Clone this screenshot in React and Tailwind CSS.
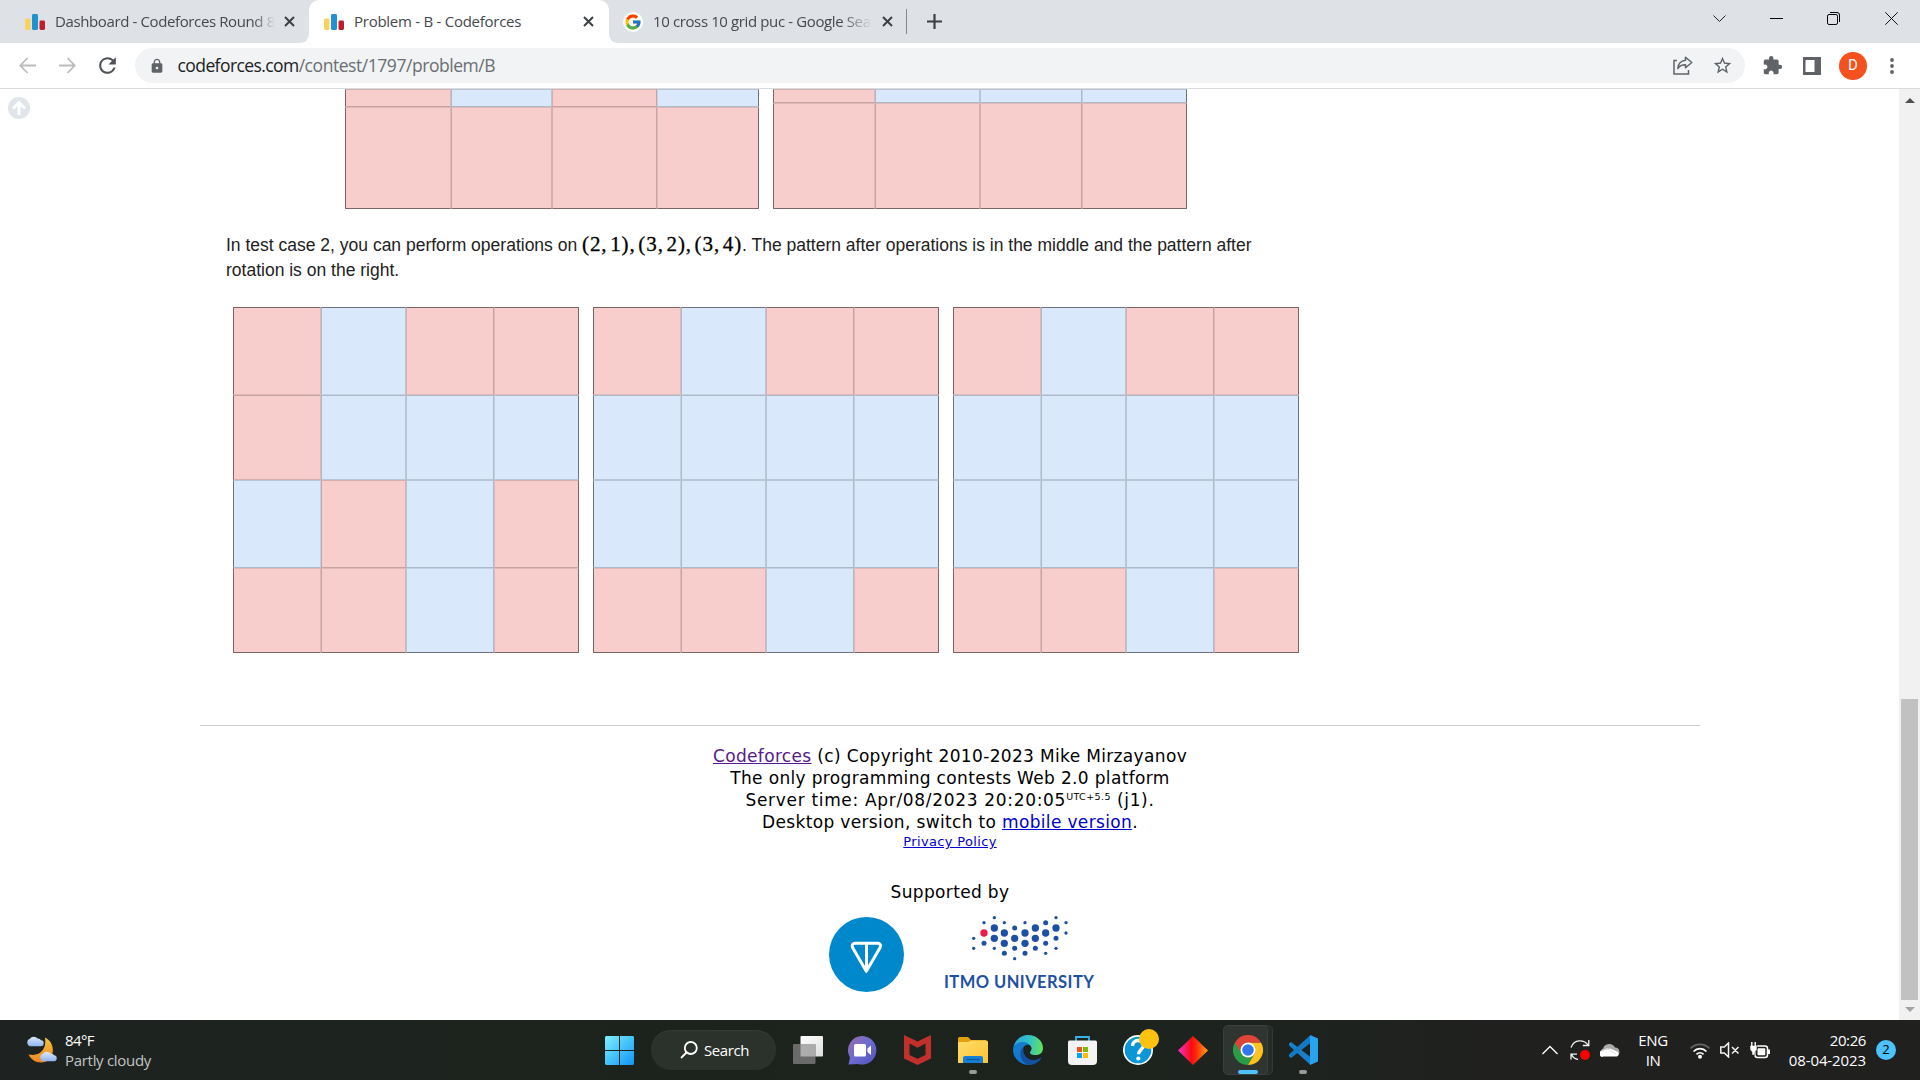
import React from "react";
import { FcGoogle } from "react-icons/fc";
import { MdExtension, MdStarBorder, MdLock, MdRefresh } from "react-icons/md";

const UI = "font-['Open_Sans','Noto_Sans',sans-serif]";

function CfIcon() {
  return (
    <svg className="h-4 w-5 shrink-0" viewBox="0 0 20 16">
      <rect x="0" y="4.5" width="5.5" height="11.5" rx="1.4" fill="#fad15c" />
      <rect x="7" y="0" width="6" height="16" rx="1.4" fill="#1f93d2" />
      <rect x="14.5" y="6.5" width="5.5" height="9.5" rx="1.4" fill="#bf1f2b" />
    </svg>
  );
}

function CloseX() {
  return (
    <svg className="h-[11px] w-[11px] shrink-0" viewBox="0 0 11 11" stroke="#3c4043" strokeWidth="2">
      <path d="M1 1l9 9M10 1l-9 9" />
    </svg>
  );
}

function TabStrip() {
  return (
    <div className={`flex h-[43px] items-stretch bg-[#dee1e6] text-[15px] text-[#45494d] ${UI}`}>
      <div className="flex h-full w-[299px] items-center pl-[25px]">
        <CfIcon />
        <div className="ml-[10px] w-[220px] whitespace-nowrap tracking-[-0.38px] [mask-image:linear-gradient(to_right,#000_90%,transparent)]">
          Dashboard - Codeforces Round 8
        </div>
        <div className="ml-[9px]"><CloseX /></div>
      </div>
      <svg className="mt-auto h-[10px] w-[10px]" viewBox="0 0 10 10"><path d="M0 10Q10 10 10 0V10Z" fill="#fff" /></svg>
      <div className="flex h-full w-[300px] items-center rounded-t-[10px] bg-white pl-[15px]">
        <CfIcon />
        <div className="ml-[10px] w-[219px] whitespace-nowrap tracking-[-0.26px]">Problem - B - Codeforces</div>
        <div className="ml-[10px]"><CloseX /></div>
      </div>
      <svg className="mt-auto h-[10px] w-[10px]" viewBox="0 0 10 10"><path d="M10 10Q0 10 0 0V10Z" fill="#fff" /></svg>
      <div className="flex h-full items-center pl-[4px]">
        <div className="flex h-5 w-5 items-center justify-center rounded-full bg-white"><FcGoogle size={18} /></div>
        <div className="ml-[10px] w-[219px] whitespace-nowrap tracking-[-0.38px] [mask-image:linear-gradient(to_right,#000_86%,transparent)]">
          10 cross 10 grid puc - Google Sea
        </div>
        <div className="ml-[10px]"><CloseX /></div>
        <div className="ml-[13px] h-[25px] w-px bg-[#85888c]" />
        <svg className="ml-[20px] h-[15px] w-[15px]" viewBox="0 0 15 15" stroke="#3c4043" strokeWidth="2.2"><path d="M7.5 0v15M0 7.5h15" /></svg>
      </div>
      <div className="ml-auto flex h-[37px] items-center pr-[22px]">
        <svg className="h-[13px] w-[13px]" viewBox="0 0 13 13" fill="none" stroke="#222"><path d="M.5 3.5l6 6 6-6" /></svg>
        <svg className="ml-[44px] h-[13px] w-[13px]" viewBox="0 0 13 13" stroke="#000"><path d="M0 6.5h13" /></svg>
        <svg className="ml-[44px] h-[13px] w-[13px]" viewBox="0 0 13 13" fill="none" stroke="#000">
          <rect x=".5" y="2.5" width="10" height="10" rx="1.6" /><path d="M3 .5h7a2.5 2.5 0 0 1 2.5 2.5v7" />
        </svg>
        <svg className="ml-[45px] h-[13px] w-[13px]" viewBox="0 0 13 13" stroke="#111"><path d="M.3.3l12.4 12.4M12.7.3L.3 12.7" /></svg>
      </div>
    </div>
  );
}

function Toolbar() {
  return (
    <div className="flex h-[46px] items-center border-b border-[#d9dbde] bg-white">
      <svg className="ml-[19px] h-[17px] w-[17px]" viewBox="0 0 17 17" fill="none" stroke="#babcbe" strokeWidth="1.8"><path d="M17 8.5H1.5M8.5 1L1.3 8.5 8.5 16" /></svg>
      <svg className="ml-[23px] h-[17px] w-[17px]" viewBox="0 0 17 17" fill="none" stroke="#babcbe" strokeWidth="1.8"><path d="M0 8.5h15.5M8.500 1l7.200 7.500L8.500 16" /></svg>
      <MdRefresh className="ml-[19px] text-[#4f5358]" size={25} />
      <div className="ml-[15px] flex h-[35px] w-[1610px] items-center rounded-full bg-[#f1f3f4] pl-[14px]">
        <MdLock className="text-[#5f6368]" size={16} />
        <div className={`ml-[12.5px] text-[17.5px] tracking-[-0.45px] text-[#6a6e73] ${UI}`}>
          <span className="tracking-[-0.58px] text-[#202124]">codeforces.com</span>/contest/1797/problem/B
        </div>
        <svg className="ml-auto h-[19px] w-[20px]" viewBox="0 0 20 19" fill="none" stroke="#5f6368" strokeWidth="1.5">
          <path d="M4 4.500H1v13.500h14.500v-4" /><path d="M12.500 1.200l6.300 5.300-6.300 5.300V8.800C9 8.800 6.500 9.800 4.800 12.500 5 8 8 4.600 12.500 4.200Z" strokeLinejoin="round" />
        </svg>
        <MdStarBorder className="ml-[19px] mr-[12px] text-[#5f6368]" size={21} />
      </div>
      <MdExtension className="ml-[17px] text-[#5f6368]" size={21} />
      <svg className="ml-[20px] h-[18px] w-[18px]" viewBox="0 0 18 18"><path d="M0 0h18v18H0z" fill="#5f6368" /><path d="M2.500 3h9v12h-9z" fill="#fff" /></svg>
      <div className="ml-[18px] flex h-7 w-7 items-center justify-center rounded-full bg-[#f4511e] font-[Roboto,sans-serif] text-[15px] text-white">D</div>
      <svg className="ml-[23px] h-[16px] w-[4px]" viewBox="0 0 4 16" fill="#5f6368"><circle cx="2" cy="2" r="1.900" /><circle cx="2" cy="8" r="1.900" /><circle cx="2" cy="14" r="1.900" /></svg>
    </div>
  );
}

const XB = [
  "border-l-black/50 border-r-black/10",
  "border-l-black/20 border-r-black/15",
  "border-l-black/15 border-r-black/20",
  "border-l-black/10 border-r-black/50",
];
const YB = [
  "border-t-black/50 border-b-black/10",
  "border-t-black/20 border-b-black/15",
  "border-t-black/15 border-b-black/20",
  "border-t-black/10 border-b-black/50",
];

/* Draws a board from rows of R (red) and B (blue) letters; partial boards show their last rows. */
function Board({ rows, tracks }) {
  const first = 4 - rows.length;
  return (
    <div className={`grid ${tracks}`}>
      {rows.map((row, y) =>
        row.split("").map((c, x) => (
          <div key={`${y}-${x}`} className={`border ${XB[x]} ${YB[y + first]} ${c === "R" ? "bg-[#f8cecc]" : "bg-[#dae8fc]"}`} />
        ))
      )}
    </div>
  );
}

const FULL = "h-[346px] w-[346px] grid-cols-[88px_85px_88px_85px] grid-rows-[88px_85px_88px_85px]";

const SMALL = [[583,113],[552,128],[613,128],[675,128],[768,113],[798,128],[798,159],[521,175],[521,205],[583,205],[644,236],[737,220],[768,205]];
const MEDIUM = [[644,144],[737,128],[552,190],[613,220],[644,205],[675,220],[706,205],[737,190],[768,175]];
const LARGE = [[583,144],[613,159],[583,175],[613,190],[644,175],[675,159],[675,190],[706,144],[706,175],[737,159],[768,144]];

function Sponsors() {
  return (
    <div className="mt-[14px] flex pl-[829px]">
      <svg className="h-[75px] w-[75px]" viewBox="87 111 225 225">
        <circle cx="199.500" cy="223.500" r="112.500" fill="#0088cc" />
        <path d="M165 190h69q11 2 6 13l-41 71-41-71q-5-11 7-13ZM199.500 190v82" fill="none" stroke="#fff" strokeWidth="9" strokeLinejoin="round" />
      </svg>
      <div className="ml-[41px] -mt-[2px] w-[150px]">
        <svg className="h-[47px] w-[150px]" viewBox="435 105 450 141" fill="#1d50a4">
          {SMALL.map(([x, y]) => <circle key={`${x},${y}`} cx={x} cy={y} r="5" />)}
          {MEDIUM.map(([x, y]) => <circle key={`${x},${y}`} cx={x} cy={y} r="7.500" />)}
          {LARGE.map(([x, y]) => <circle key={`${x},${y}`} cx={x} cy={y} r="11" />)}
          <circle cx="552" cy="159" r="11" fill="#ee1a4a" />
        </svg>
        <div className="-ml-px mt-[9px] whitespace-nowrap font-[Lato,sans-serif] text-[16.500px] font-bold leading-[22px] tracking-[0.45px] text-[#1d50a4]">ITMO UNIVERSITY</div>
      </div>
    </div>
  );
}

function Page() {
  return (
    <div className="flex h-[931px] bg-white">
      <main className="relative w-[1899px] overflow-hidden">
        <svg className="absolute left-[7.5px] top-[8px] h-[22px] w-[22px]" viewBox="0 0 22 22">
          <circle cx="11" cy="11" r="11" fill="#e0e5eb" /><path d="M11 18V6M5 11.500l6-6 6 6" fill="none" stroke="#fff" strokeWidth="3" />
        </svg>
        <div className="flex gap-[14px] pl-[345px]">
          <Board rows={["RBRB", "RRRR"]} tracks="grid-cols-[106px_101px_105px_102px] grid-rows-[18px_102px]" />
          <Board rows={["RBBB", "RRRR"]} tracks="grid-cols-[102px_105px_102px_105px] grid-rows-[14px_106px]" />
        </div>
        <p className="mt-[24px] w-[1060px] whitespace-nowrap pl-[226px] font-['Liberation_Sans',Arial,sans-serif] text-[17.500px] leading-[25px] text-[#222]">
          In test case 2, you can perform operations on{" "}
          <span className="font-['Liberation_Serif',serif] text-[21px] leading-none tracking-[0.9px] text-black [-webkit-text-stroke:0.3px_#000] [word-spacing:-3.45px]">(2, 1), (3, 2), (3, 4)</span>. The pattern after operations is in the middle and the pattern after
          <br />
          rotation is on the right.
        </p>
        <div className="mt-[24px] flex gap-[14px] pl-[233px]">
          <Board rows={["RBRR", "RBBB", "BRBR", "RRBR"]} tracks={FULL} />
          <Board rows={["RBRR", "BBBB", "BBBB", "RRBR"]} tracks={FULL} />
          <Board rows={["RBRR", "BBBB", "BBBB", "RRBR"]} tracks={FULL} />
        </div>
        <div className="ml-[200px] mt-[72px] h-px w-[1500px] bg-[#ccc]" />
        <footer className="mt-[19px]">
          <div className="ml-[200px] w-[1500px] text-center font-['DejaVu_Sans',Verdana,sans-serif] text-[17px] leading-[22px] tracking-[0.34px] text-black">
            <div><a className="text-[#551a8b] underline">Codeforces</a> (c) Copyright 2010-2023 Mike Mirzayanov</div>
            <div>The only programming contests Web 2.0 platform</div>
            <div className="tracking-[0.68px]">Server time: Apr/08/2023 20:20:05<sup className="relative -top-[6px] align-baseline text-[9.500px] leading-none tracking-[0.4px]">UTC+5.5</sup> (j1).</div>
            <div>Desktop version, switch to <a className="text-[#0000cc] underline">mobile version</a>.</div>
            <div className="text-[13px] leading-[18px]"><a className="text-[#0000cc] underline">Privacy Policy</a></div>
            <div className="mt-[30px]">Supported by</div>
          </div>
          <Sponsors />
        </footer>
      </main>
      <div className="flex w-[21px] flex-col items-center bg-[#f1f1f1]">
        <svg className="mt-[9px] h-[5px] w-[10px]" viewBox="0 0 10 5" fill="#505050"><path d="M0 5L5 0l5 5z" /></svg>
        <div className="mt-[596px] h-[301px] w-[17px] bg-[#c1c1c1]" />
        <svg className="mt-[7px] h-[5px] w-[10px]" viewBox="0 0 10 5" fill="#a3a3a3"><path d="M0 0h10L5 5z" /></svg>
      </div>
    </div>
  );
}

function Slot({ children, mark }) {
  return (
    <div className="relative flex h-[60px] w-[55px] items-center justify-center">
      {children}
      {mark && <div className="absolute bottom-[6px] h-[4px] w-[8px] rounded-full bg-[#9a9a9a]" />}
    </div>
  );
}

const Cloud = ({ x, y, s }) => (
  <path transform={`translate(${x} ${y}) scale(${s})`} d="M4 11a4 4 0 0 1 0-7.600A5 5 0 0 1 12 3a3.500 3.500 0 0 1 3.500 2A3 3 0 0 1 15 11Z" fill="url(#cl)" />
);

function Taskbar() {
  return (
    <div className={`flex h-[60px] items-center bg-[linear-gradient(to_right,#1e2321_0%,#1c231c_35%,#1d231e_65%,#20201f_80%,#20201f_100%)] text-[15px] text-white ${UI}`}>
      <div className="flex w-[605px] items-center pl-[26px]">
        <svg className="h-[30px] w-[31px]" viewBox="0 0 31 30">
          <defs>
            <linearGradient id="mn" x1="0" y1="0" x2="0" y2="1"><stop offset="0" stopColor="#f4c63d" /><stop offset="1" stopColor="#f08322" /></linearGradient>
            <linearGradient id="cl" x1="0" y1="0" x2="0" y2="1"><stop offset="0" stopColor="#dce9fd" /><stop offset="1" stopColor="#8fb4ee" /></linearGradient>
          </defs>
          <path d="M19 2.500C31 8 29 27.500 15 27.500 9 27.500 5 24 2.500 19.500 14 22 21 14 19 2.500Z" fill="url(#mn)" />
          <Cloud x={0} y={0.5} s={0.97} />
          <Cloud x={13} y={15.500} s={0.97} />
        </svg>
        <div className="ml-[8px] leading-[20px]">
          <div className="tracking-[-0.6px]">84°F</div>
          <div className="tracking-[-0.3px] text-[#c3c3c3]">Partly cloudy</div>
        </div>
      </div>
      <svg className="h-[29px] w-[29px]" viewBox="0 0 29 29">
        <defs><linearGradient id="wn" x1="0" y1="0" x2="1" y2="1"><stop offset="0" stopColor="#7df0fe" /><stop offset="1" stopColor="#0f95f8" /></linearGradient></defs>
        <path d="M1 0h13v14H0V1zM15 0h13l1 1v13H15zM0 15h14v14H1l-1-1zM15 15h14v13l-1 1H15z" fill="url(#wn)" />
      </svg>
      <div className="ml-[17px] flex h-[40px] w-[125px] items-center rounded-full bg-[#2b322c] pl-[29px] shadow-[inset_0_1px_0_#353b36]">
        <svg className="h-[18px] w-[18px]" viewBox="0 0 18 18" fill="none" stroke="#fff" strokeWidth="1.800"><circle cx="10.800" cy="7" r="6" /><path d="M6.500 11.500L1 17" /></svg>
        <span className="ml-[6px] tracking-[-0.4px]">Search</span>
      </div>
      <div className="ml-[4px] flex">
        <Slot>
          <svg className="h-[28px] w-[30px]" viewBox="0 0 30 28">
            <defs><linearGradient id="tv" x1="0" y1="0" x2="1" y2="1"><stop offset="0" stopColor="#fff" /><stop offset="1" stopColor="#dedede" /></linearGradient></defs>
            <rect x="7.500" y="0" width="22.500" height="20.500" rx="1" fill="url(#tv)" /><rect x="0" y="8" width="22.500" height="20" rx="1" fill="#6a6a6a" /><path d="M7.500 8H22.500V20.500H7.500z" fill="#acacac" />
          </svg>
        </Slot>
        <Slot>
          <svg className="h-[29px] w-[29px]" viewBox="0 0 29 29">
            <defs><linearGradient id="ct" x1="0" y1="0" x2="1" y2="1"><stop offset="0" stopColor="#9a6dab" /><stop offset=".5" stopColor="#6c6bd0" /><stop offset="1" stopColor="#5351c0" /></linearGradient></defs>
            <path d="M14.500 0A14.300 14.300 0 1 1 10 28L.5 28.500 2 21.500A14.300 14.300 0 0 1 14.500 0Z" fill="url(#ct)" />
            <rect x="6" y="8" width="12" height="12.500" rx="1.500" fill="#fff" /><path d="M19.500 12.500L23 9.500v9.500l-3.500-3z" fill="#fff" />
          </svg>
        </Slot>
        <Slot>
          <svg className="h-[30px] w-[27px]" viewBox="0 0 27 30"><path fillRule="evenodd" d="M0 0L13.500 6.500 27 0v23.500L13.500 30 0 23.500ZM5.500 8.500v11.500l8 3.700 8-3.700V8.500l-8 4.200Z" fill="#c1302d" /></svg>
        </Slot>
        <Slot mark>
          <svg className="h-[26px] w-[30px]" viewBox="0 0 30 26">
            <defs><linearGradient id="fo" x1="0" y1="0" x2="1" y2="1"><stop offset="0" stopColor="#ffdc6b" /><stop offset="1" stopColor="#fcc432" /></linearGradient></defs>
            <path d="M0 1.500A1.500 1.500 0 0 1 1.500 0H10l3 3H28v8H0z" fill="#e0a10c" /><path d="M0 5h10l3-1.500h15.500A1.500 1.500 0 0 1 30 5v21H0z" fill="url(#fo)" />
            <path d="M5 26v-5a2 2 0 0 1 2-2h16a2 2 0 0 1 2 2v5z" fill="#147fd3" /><path d="M8.500 22.500h13" stroke="#0b57a0" strokeWidth="1.200" />
          </svg>
        </Slot>
        <Slot>
          <svg className="h-[30px] w-[30px]" viewBox="0 0 30 30">
            <defs>
              <linearGradient id="e1" x1="0" y1=".4" x2="1" y2=".5"><stop offset="0" stopColor="#2aa5e0" /><stop offset=".55" stopColor="#35c3c4" /><stop offset="1" stopColor="#63e35a" /></linearGradient>
              <linearGradient id="e2" x1="0" y1="0" x2="0" y2="1"><stop offset="0" stopColor="#1480d0" /><stop offset="1" stopColor="#1274d0" /></linearGradient>
            </defs>
            <path d="M.3 12.500C2 5 8 0 15 0c8.500 0 15 6 15 13 0 4.500-3 7-7 7-3.500 0-6.500-1-6-3 2-2 2.500-5-1-7.500C11 6 4 7 .3 12.500Z" fill="url(#e1)" />
            <path d="M0 15c0-5 4.500-8 9-8 3.500 0 6 1.200 7.500 3-4-1-7 2-7.500 6-.5 6 4 11.500 9.500 13.500C10 31 0 25 0 15Z" fill="url(#e2)" />
            <path d="M11 11.500C8.500 19 14 25 20.500 25c3 0 5.500-1 7.300-2.500.5-.4.8 0 .4.700C26 27 21.500 30 16 30 10 29 6.500 22 7.500 17c.5-2.500 1.800-4.500 3.500-5.500Z" fill="#1250a0" />
          </svg>
        </Slot>
        <Slot>
          <svg className="h-[29px] w-[29px]" viewBox="0 0 29 29">
            <path d="M8 6V1h13v5" fill="none" stroke="#36b3ea" strokeWidth="1.800" />
            <path d="M1 4.500h27l1 1V25a4 4 0 0 1-4 4H4a4 4 0 0 1-4-4V5.500z" fill="#f3f3f3" />
            <path d="M9 11h5v5H9z" fill="#f25022" /><path d="M15 11h5v5h-5z" fill="#7fba00" /><path d="M9 17h5v5H9z" fill="#00a4ef" /><path d="M15 17h5v5h-5z" fill="#ffb900" />
          </svg>
        </Slot>
        <Slot>
          <svg className="h-[40px] w-[40px] overflow-visible" viewBox="-5 -5 40 40">
            <circle cx="15" cy="15" r="15" fill="#fff" /><circle cx="15" cy="15" r="13.300" fill="#0b96d8" />
            <path d="M9.500 11c0-3.500 2.500-5.500 5.500-5.500s5.500 2 5.500 4.800c0 4-5 4.500-5 9" fill="none" stroke="#fff" strokeWidth="3.400" /><circle cx="15.300" cy="23.500" r="2.100" fill="#fff" />
            <circle cx="26" cy="4" r="10" fill="#ffc20e" />
          </svg>
        </Slot>
        <Slot>
          <svg className="h-[29px] w-[30px]" viewBox="0 0 30 29">
            <defs><linearGradient id="dm"><stop offset="0" stopColor="#f035c8" /><stop offset=".45" stopColor="#fb0a12" /><stop offset=".6" stopColor="#fb2a08" /><stop offset="1" stopColor="#fba51a" /></linearGradient></defs>
            <path d="M15 0l15 14.500L15 29 0 14.500z" fill="url(#dm)" />
          </svg>
        </Slot>
        <Slot>
          <div className="absolute left-[8px] top-[5px] h-[50px] w-[45px] rounded-[5px] border border-[#353936] bg-[#282c29]" />
          <div className="absolute left-[2.500px] top-[5px] flex h-[50px] w-[45px] items-center justify-center rounded-[5px] border border-[#3b403c] bg-[#303531]" />
          <svg className="relative h-[30px] w-[30px]" viewBox="0 0 30 30">
            <path d="M15 15L2 7.500A15 15 0 0 0 15 30l6.500-11.250Z" fill="#2a9c47" />
            <path d="M15 30a15 15 0 0 0 13-22.500H15l6.500 11.250Z" fill="#fcc31e" />
            <path d="M2 7.500a15 15 0 0 1 26 0H15a7.500 7.500 0 0 0-6.500 11.250Z" fill="#e04436" />
            <circle cx="15" cy="15" r="7.500" fill="#fff" /><circle cx="15" cy="15" r="5.800" fill="#2f77ea" />
          </svg>
          <div className="absolute bottom-[6px] h-[4px] w-[20px] rounded-full bg-[#4cc2ff]" />
        </Slot>
        <Slot mark>
          <svg className="h-[30px] w-[30px]" viewBox="0 0 30 30">
            <path d="M1 8.500L3 7 22.500 22v8L1 10.500Z" fill="#1a7fc9" /><path d="M1 21.500L3 23 22.500 8V0L1 19.500Z" fill="#1279c4" />
            <path d="M22 0l8 3.500v23L22 30Z" fill="#27a3f0" />
          </svg>
        </Slot>
      </div>
      <div className="ml-auto flex items-center">
        <svg className="h-[10px] w-[16px]" viewBox="0 0 16 10" fill="none" stroke="#fff" strokeWidth="1.300"><path d="M.5 9L8 1.500 15.500 9" /></svg>
        <svg className="ml-[12px] h-[20px] w-[20px]" viewBox="0 0 20 20" fill="none" stroke="#f3f3f3" strokeWidth="1.300">
          <path d="M1 7.500C4-1 14-1 18.500 5.500M18.800 0v5.500h-6M8 19.500C5 19 3 17.500 1.500 14.500M1 19.500v-5.300h6" /><circle cx="15" cy="15" r="5" fill="#f00" stroke="none" />
        </svg>
        <svg className="ml-[10px] h-[14px] w-[20px]" viewBox="0 0 20 14">
          <path d="M3.500 13a3.800 3.800 0 0 1-.5-7.300A6.500 6.500 0 0 1 15 4.500 4.300 4.300 0 0 1 16 13Z" fill="#aaa" />
          <path d="M3.500 13.500a3 3 0 0 1-2.500-5.500L10 5.500l7 3a2.700 2.700 0 0 1 0 5z" fill="#fff" /><path d="M0 9l7-3.500L16 11" fill="none" stroke="#ddd" />
        </svg>
        <div className="ml-[17px] w-[32px] text-center leading-[20px] tracking-[-0.4px]"><div>ENG</div><div>IN</div></div>
        <svg className="ml-[21px] h-[17px] w-[20px]" viewBox="0 0 20 17" fill="none" stroke="#fff" strokeWidth="1.700">
          <path d="M.5 6.500a13 13 0 0 1 19 0" stroke="#666" /><path d="M3.500 9.500a9 9 0 0 1 13 0M6.500 12.300a5 5 0 0 1 7 0" /><circle cx="10" cy="14.800" r="2" fill="#fff" stroke="none" />
        </svg>
        <svg className="ml-[10px] h-[16px] w-[20px]" viewBox="0 0 20 16" fill="none" stroke="#f3f3f3" strokeWidth="1.500"><path d="M.8 5v6h3.500L8.500 15V1L4.300 5ZM12 5l6.500 6.500M18.500 5L12 11.500" /></svg>
        <svg className="ml-[10px] h-[17px] w-[20px]" viewBox="0 0 20 17">
          <rect x="5" y="4" width="12.500" height="11.500" rx="2.500" fill="none" stroke="#fff" strokeWidth="1.500" /><rect x="7.500" y="6.300" width="7.800" height="7" rx="1" fill="#fff" /><path d="M18 7.500h2v4.500h-2z" fill="#fff" />
          <path d="M0 3.500h7V7a3 3 0 0 1-2 2.700V13H2V9.700A3 3 0 0 1 0 7Z" fill="#fff" stroke="#20201f" strokeWidth=".5" /><path d="M1.800 0v4M5.200 0v4" stroke="#fff" strokeWidth="1.400" />
        </svg>
        <div className="ml-[16px] w-[80px] whitespace-nowrap text-right leading-[20px]"><div className="tracking-[-0.4px]">20:26</div><div className="tracking-[-0.1px]">08-04-2023</div></div>
        <div className="ml-[10px] mr-[24px] flex h-5 w-5 items-center justify-center rounded-full bg-[#4cc2ff] text-[13px] text-black">2</div>
      </div>
    </div>
  );
}

export default function App() {
  return (
    <div className="flex h-[1080px] w-[1920px] flex-col overflow-hidden bg-white">
      <TabStrip />
      <Toolbar />
      <Page />
      <Taskbar />
    </div>
  );
}
